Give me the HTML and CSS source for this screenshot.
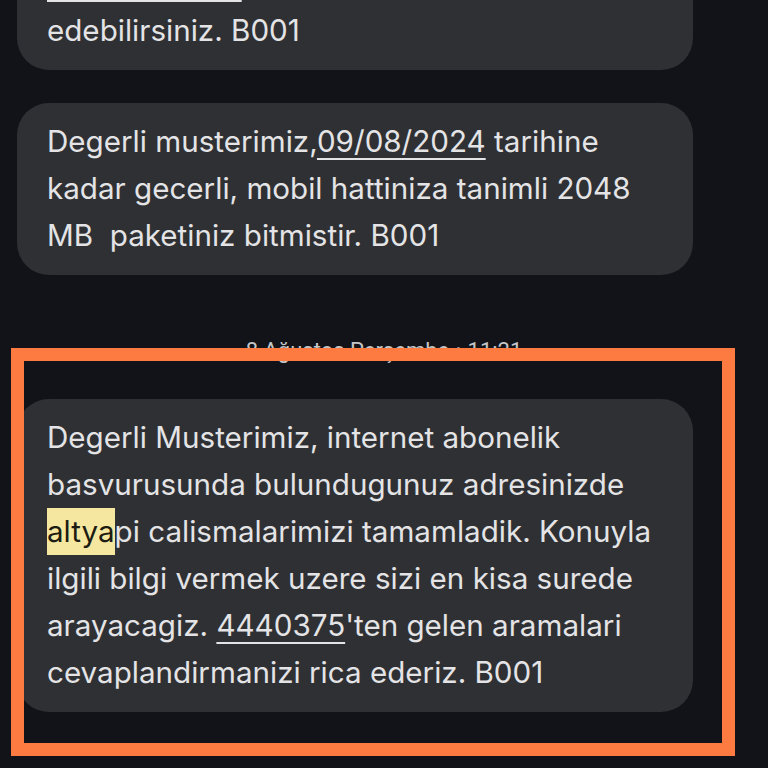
FILE: index.html
```html
<!DOCTYPE html>
<html lang="tr">
<head>
<meta charset="utf-8">
<title>Mesajlar</title>
<link rel="stylesheet" href="styles.css">
</head>
<body>
<main class="thread">
  <div class="bubble bubble-first">
    <p class="msg"><span class="link">turktelekom.tr</span> adresinden kontrol edebilir, talepte<br>edebilirsiniz. B001</p>
  </div>
  <div class="bubble bubble-second">
    <p class="msg">Degerli musterimiz,<span class="link">09/08/2024</span> tarihine<br>kadar gecerli, mobil hattiniza tanimli 2048<br>MB&nbsp; paketiniz bitmistir. B001</p>
  </div>
  <div class="separator">8 Ağustos Perşembe • 11:21</div>
  <div class="bubble bubble-third">
    <p class="msg">Degerli Musterimiz, internet abonelik<br>basvurusunda bulundugunuz adresinizde<br><mark class="hl">altya</mark>pi calismalarimizi tamamladik. Konuyla<br>ilgili bilgi vermek uzere sizi en kisa surede<br>arayacagiz. <span class="link">4440375</span>'ten gelen aramalari<br>cevaplandirmanizi rica ederiz. B001</p>
  </div>
  <div class="annotation"></div>
</main>
</body>
</html>
```

FILE: styles.css
```css
html, body {
  margin: 0;
  padding: 0;
  background: #111319;
  height: 100%;
  overflow: hidden;
}

.thread {
  position: relative;
  display: flex;
  flex-direction: column;
  align-items: flex-start;
  padding-left: 17px;
  margin-top: -55px;
  font-family: Inter, Roboto, "Noto Sans", sans-serif;
}

.bubble {
  width: 676px;
  box-sizing: border-box;
  background: #2f3033;
  border-radius: 32px;
  padding: 15px 20px 16px 30px;
}

.bubble-second {
  margin-top: 33px;
}

.msg {
  margin: 0;
  font-size: 29.6px;
  line-height: 47px;
  color: #e4e4e6;
  white-space: nowrap;
}

.link {
  text-decoration: underline;
  text-decoration-thickness: 2px;
  text-underline-offset: 6px;
}

.hl {
  display: inline-block;
  line-height: 47px;
  background: #f6e7a0;
  color: #1d1c12;
}

.separator {
  align-self: stretch;
  margin-left: -17px;
  text-align: center;
  font-family: Roboto, sans-serif;
  font-size: 22px;
  line-height: 20px;
  color: #c4c6c8;
  padding: 66px 0 38px;
}

.annotation {
  position: absolute;
  left: 11px;
  top: 403px;
  width: 724px;
  height: 408px;
  box-sizing: border-box;
  border: 13.5px solid #fd7a40;
}
```
